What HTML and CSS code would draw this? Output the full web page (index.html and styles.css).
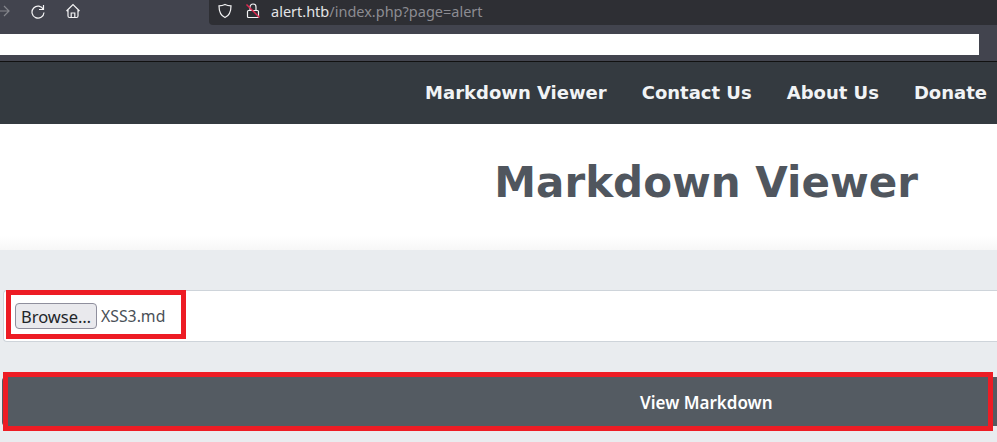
FILE: index.html

```html
<!DOCTYPE html>
<html lang="en">
<head>
  <meta charset="UTF-8">
  <title>Markdown Viewer</title>
  <link rel="stylesheet" href="styles.css">
</head>
<body>
  <div class="toolbar">
    <div class="nav-btns">
      <svg class="ico ico-fwd" viewBox="0 0 16 16"><path d="M1 8h13M9 3l5 5-5 5"/></svg>
      <svg class="ico" viewBox="0 0 16 16"><path d="M13.500 2v4.500H9M13.400 6.500A6 6 0 1 0 14 9.500"/></svg>
      <svg class="ico" viewBox="0 0 16 16"><path d="M1.500 8L8 1.500 14.500 8M3 6.500V13a1.500 1.500 0 0 0 1.500 1.500h7A1.500 1.500 0 0 0 13 13V6.500M6.200 14.500V10h3.600v4.500"/></svg>
    </div>
    <div class="urlbar">
      <svg class="ico" viewBox="0 0 16 16"><path d="M8 1.500c2 1 4 1.400 6 1.400 0 5-1.500 9.500-6 11.600C3.500 12.400 2 7.900 2 2.900c2 0 4-.4 6-1.400z"/></svg>
      <svg class="ico ico-lock" viewBox="0 0 16 16"><path d="M5 7V4a3 3 0 0 1 6 0v3M3.500 7.500h9a1 1 0 0 1 1 1v5a1 1 0 0 1-1 1h-9a1 1 0 0 1-1-1v-5a1 1 0 0 1 1-1z"/><path class="slash" d="M1.500 1.500l13 13"/></svg>
      <span class="url"><span class="host">alert.htb</span>/index.php?page=alert</span>
    </div>
  </div>
  <div class="bookmarks"><div class="blank"></div></div>

  <nav class="site-nav">
    <a href="#">Markdown Viewer</a>
    <a href="#">Contact Us</a>
    <a href="#">About Us</a>
    <a href="#">Donate</a>
  </nav>

  <header class="title"><h1>Markdown Viewer</h1></header>

  <main class="content">
    <div class="file-row">
      <button class="browse">Browse…</button>
      <span class="filename">XSS3.md</span>
      <div class="mark mark-file"></div>
    </div>
    <div class="submit">
      View Markdown
      <div class="mark mark-submit"></div>
    </div>
  </main>
</body>
</html>
```

FILE: styles.css

```css
html, body { margin: 0; padding: 0; }
body { width: 997px; height: 442px; overflow: hidden; background: #e9ecef; font-family: "DejaVu Sans", sans-serif; }

.toolbar { height: 26px; background: #42444e; display: flex; }
.nav-btns { width: 214px; flex: none; display: flex; align-items: center; gap: 19px; box-sizing: border-box; margin-left: -5px; height: 22px; }
.ico { width: 16px; height: 16px; fill: none; stroke: #f4f4f5; stroke-width: 1.2; flex: none; }
.ico-fwd { stroke: #85868c; }
.urlbar { flex: 1; height: 25px; background: #2e2f34; border-radius: 0 0 0 4px; display: flex; align-items: center; gap: 12px; padding: 0 0 4px 8px; box-sizing: border-box; }
.ico-lock .slash { stroke: #e22850; stroke-width: 1.5; }
.url { font-family: "Noto Sans", sans-serif; font-size: 14.5px; color: #8c8c92; margin-left: -2px; }
.host { color: #e4e4e6; }

.bookmarks { height: 36px; background: #42444e; padding-top: 8px; box-sizing: border-box; border-bottom: 1px solid #111; }
.blank { width: 979px; height: 21px; background: #fff; }

.site-nav { height: 62px; background: #343a40; display: flex; justify-content: flex-end; align-items: center; gap: 35px; padding: 0 10px 2px 0; box-sizing: border-box; }
.site-nav a { color: #f1f3f5; font-size: 18px; font-weight: bold; text-decoration: none; }

.title { height: 126px; background: linear-gradient(#fff 112px, #f7f7f7); box-sizing: border-box; padding: 33px 79px 0 0; text-align: right; }
.title h1 { margin: 0; font-size: 42px; line-height: 52px; color: #50565e; font-weight: bold; }

.content { padding-top: 40px; }
.file-row { position: relative; height: 52px; margin-left: 3px; background: #fff; border: 1px solid #ced4da; border-right: 0; border-radius: 4px 0 0 4px; box-sizing: border-box; display: flex; align-items: center; gap: 4px; padding-left: 11px; }
.browse { font-family: "Noto Sans", sans-serif; font-size: 16.5px; height: 26px; width: 82px; padding: 0; color: #212529; background: #e9e9ed; border: 1px solid #8f8f9d; border-radius: 4px; }
.filename { font-family: "Noto Sans", sans-serif; font-size: 15.8px; color: #495057; }
.submit { position: relative; height: 49px; margin: 35px 0 0 2px; background: #545b62; border-radius: 4px 0 0 4px; color: #fff; font-family: "Noto Sans", sans-serif; font-size: 17px; font-weight: 600; line-height: 52px; box-sizing: border-box; padding-left: 638px; }

.mark { position: absolute; border: 5px solid #ed1c24; box-sizing: border-box; }
.mark-file { left: 2px; top: -1px; width: 180px; height: 49px; }
.mark-submit { left: 1px; top: -5px; width: 990px; height: 59px; }
```
